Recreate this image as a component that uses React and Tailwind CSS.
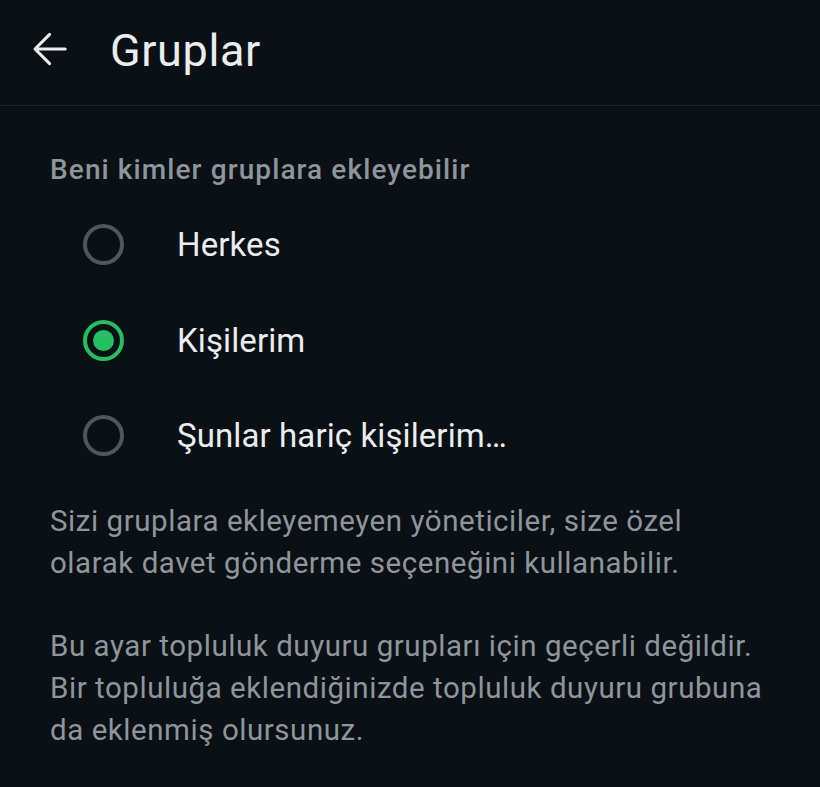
import React from "react";

const options = ["Herkes", "Kişilerim", "Şunlar hariç kişilerim…"];

function Radio({ checked }) {
  return (
    <div
      className={
        "w-[41px] h-[41px] rounded-full border-[4px] flex items-center justify-center shrink-0 " +
        (checked ? "border-[#21c063]" : "border-[#50575c]")
      }
    >
      {checked && <div className="w-[21px] h-[21px] rounded-full bg-[#21c063]" />}
    </div>
  );
}

export default function App() {
  const selected = 1;
  return (
    <div
      className="w-[820px] h-[787px] bg-[#0b1014] text-[#e9edef] overflow-hidden"
      style={{ fontFamily: "Roboto, 'Noto Sans', sans-serif" }}
    >
      <header className="h-[106px] flex items-center border-b border-[#1f2529]">
        <div className="w-[110px] flex items-center pl-[26px] -mt-[8px]">
          <svg width="48" height="48" viewBox="0 0 24 24" fill="none">
            <path
              d="M19.6 12H4.9M11.8 4.7L4.5 12l7.3 7.3"
              stroke="#e9edef"
              strokeWidth="1.5"
              strokeLinecap="round"
              strokeLinejoin="round"
            />
          </svg>
        </div>
        <h1 className="text-[45px] leading-none font-normal tracking-[0.6px] -mt-[4px]">Gruplar</h1>
      </header>

      <div className="px-[50px] pt-[47px]">
        <div className="text-[28px] leading-[34px] font-medium text-[#8d969c] tracking-[1.1px]">
          Beni kimler gruplara ekleyebilir
        </div>

        <div className="mt-[10px] flex flex-col">
          {options.map((o, i) => (
            <div key={o} className="h-[95.5px] flex items-center">
              <div className="w-[127px] pl-[33px]">
                <Radio checked={i === selected} />
              </div>
              <span className="text-[33px] text-[#e9edef] tracking-[0.1px]">{o}</span>
            </div>
          ))}
        </div>

        <div className="mt-[16px] text-[29.5px] leading-[42px] text-[#8d969c] tracking-[0.55px]">
          <p>
            Sizi gruplara ekleyemeyen yöneticiler, size özel
            <br />
            olarak davet gönderme seçeneğini kullanabilir.
          </p>
          <p className="mt-[41px]">
            Bu ayar topluluk duyuru grupları için geçerli değildir.
            <br />
            Bir topluluğa eklendiğinizde topluluk duyuru grubuna
            <br />
            da eklenmiş olursunuz.
          </p>
        </div>
      </div>
    </div>
  );
}
